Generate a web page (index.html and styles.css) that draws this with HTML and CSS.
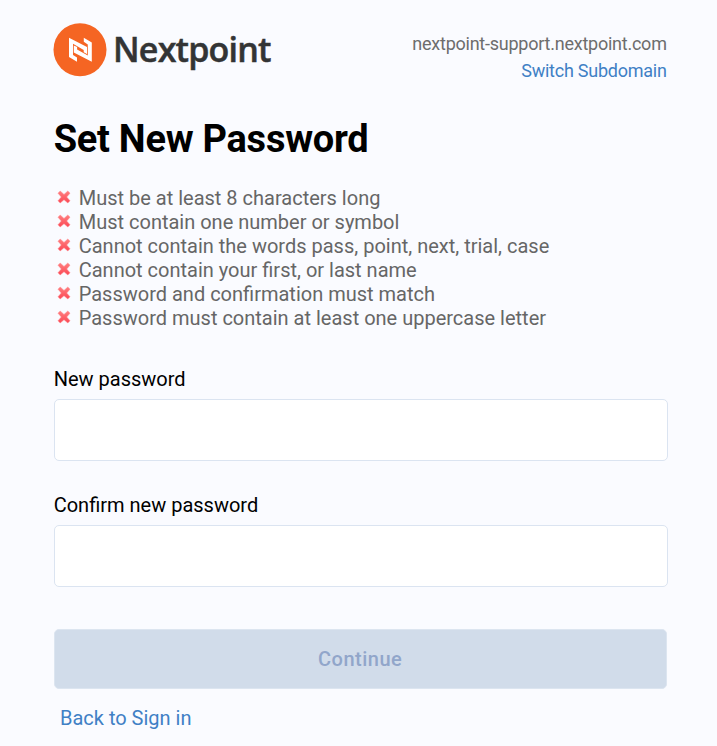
FILE: index.html
```html
<!DOCTYPE html>
<html lang="en">
<head>
<meta charset="utf-8">
<title>Set New Password</title>
<link rel="stylesheet" href="styles.css">
</head>
<body>
<main class="page">
  <header class="header">
    <svg class="logo" width="220" height="56" viewBox="0 0 220 56" role="img" aria-label="Nextpoint">
      <circle class="logo-disc" cx="27" cy="27.7" r="26.5"/>
      <g class="logo-mark">
        <path d="M16 15.700 34 25v7l-3.300-1.700v-2.300L20 21.800v11.200l4 2.600v4.100L16 35z"/>
        <path d="M16 15.700 34 25v7l-3.300-1.700v-2.300L20 21.800v11.200l4 2.600v4.100L16 35z" transform="rotate(180 27.400 27.700)"/>
      </g>
      <text class="logo-text" x="60" y="39.800" textLength="158.500">Nextpoint</text>
    </svg>
    <div class="domain">
      <span>nextpoint-support.nextpoint.com</span>
      <a class="link">Switch Subdomain</a>
    </div>
  </header>
  <h1 class="title">Set New Password</h1>
  <svg class="defs" width="0" height="0">
    <linearGradient id="red" x1="0" y1="0" x2="0" y2="1"><stop offset="0" stop-color="#ff8080"/><stop offset="1" stop-color="#fb4754"/></linearGradient>
    <symbol id="cross" viewBox="0 0 14 14"><path fill="url(#red)" stroke="#ff858b" stroke-width=".5" stroke-linejoin="round" d="M1 3.200 3.200 1 7 4.400 10.800 1 13 3.200 9.700 7 13 10.800 10.800 13 7 9.700 3.200 13 1 10.800 4.300 7z"/></symbol>
  </svg>
  <ul class="rules">
    <li><svg class="cross"><use href="#cross"/></svg>Must be at least 8 characters long</li>
    <li><svg class="cross"><use href="#cross"/></svg>Must contain one number or symbol</li>
    <li><svg class="cross"><use href="#cross"/></svg>Cannot contain the words pass, point, next, trial, case</li>
    <li><svg class="cross"><use href="#cross"/></svg>Cannot contain your first, or last name</li>
    <li><svg class="cross"><use href="#cross"/></svg>Password and confirmation must match</li>
    <li><svg class="cross"><use href="#cross"/></svg>Password must contain at least one uppercase letter</li>
  </ul>
  <form class="form">
    <label class="label" for="new">New password</label>
    <input class="input" id="new" type="password">
    <label class="label" for="confirm">Confirm new password</label>
    <input class="input" id="confirm" type="password">
    <button class="button" type="button" disabled>Continue</button>
  </form>
  <a class="link back">Back to Sign in</a>
</main>
</body>
</html>
```
FILE: styles.css
```css
* { box-sizing: border-box; }
body {
  margin: 0;
  background: #fafbff;
  font-family: Roboto, "Liberation Sans", sans-serif;
  font-size: 20px;
  line-height: 24px;
  color: #000;
}
.page { width: 614px; margin-left: 53.7px; padding-top: 22px; }
.header { display: flex; justify-content: space-between; height: 94px; }
.logo { flex: none; margin-left: -.7px; }
.logo-disc { fill: #f56523; }
.logo-mark { fill: #fff; }
.logo-text {
  font: 600 34px "Open Sans", sans-serif;
  fill: #333435;
  stroke: #333435;
  stroke-width: .5px;
}
.domain {
  display: flex;
  flex-direction: column;
  align-items: flex-end;
  padding: 8px 1px 0 0;
  font-size: 18px;
  line-height: 27px;
  letter-spacing: -.24px;
  color: #6d6d6d;
}
.link { color: #3f80c5; }
.title { margin: 0; font-size: 38px; line-height: 46px; font-weight: 700; letter-spacing: -.26px; }
.defs { position: absolute; }
.rules { list-style: none; margin: 24px 0 0; padding: 0; color: #666; }
.rules li { display: flex; align-items: center; height: 24px; }
.cross { width: 14px; height: 14px; margin: -2px 7.500px 0 3.500px; flex: none; }
.form { display: flex; flex-direction: column; margin-top: 37px; }
.label { height: 24px; }
.input {
  width: 100%;
  height: 62px;
  margin: 7.600px 0 32.400px;
  padding: 0 16px;
  border: 1.5px solid #dbe4f1;
  border-radius: 5px;
  background: #fff;
}
.button {
  height: 60px;
  margin: 9.800px 1px 0 0;
  border: 1px solid #dce5f0;
  border-radius: 5px;
  background: #d1dcea;
  color: #91a6ca;
  font: 500 20px/24px Roboto, sans-serif;
  letter-spacing: .5px;
}
.back { display: block; margin: 17.400px 0 0 6.300px; }
```
